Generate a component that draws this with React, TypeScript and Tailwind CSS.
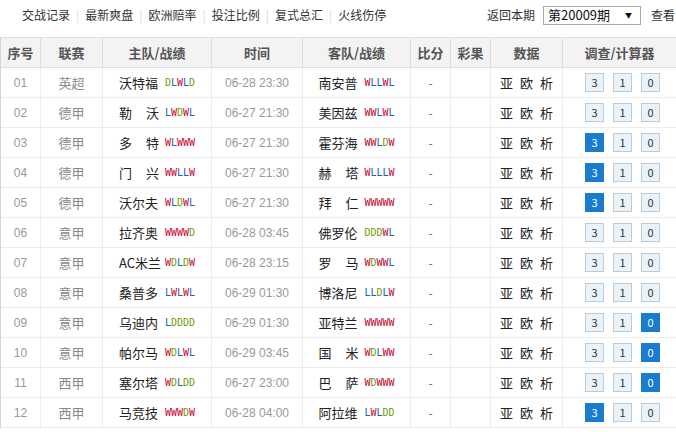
import { FC } from "react";

type Row = {
  no: string;
  league: string;
  home: string;
  homeForm: string;
  time: string;
  away: string;
  awayForm: string;
  pick: "3" | "1" | "0" | "";
};

const rows: Row[] = [
  { no: "01", league: "英超", home: "沃特福", homeForm: "DLWLD", time: "06-28 23:30", away: "南安普", awayForm: "WLLWL", pick: "" },
  { no: "02", league: "德甲", home: "勒 沃", homeForm: "LWDWL", time: "06-27 21:30", away: "美因兹", awayForm: "WWLWL", pick: "" },
  { no: "03", league: "德甲", home: "多 特", homeForm: "WLWWW", time: "06-27 21:30", away: "霍芬海", awayForm: "WWLDW", pick: "3" },
  { no: "04", league: "德甲", home: "门 兴", homeForm: "WWLLW", time: "06-27 21:30", away: "赫 塔", awayForm: "WLLLW", pick: "3" },
  { no: "05", league: "德甲", home: "沃尔夫", homeForm: "WLDWL", time: "06-27 21:30", away: "拜 仁", awayForm: "WWWWW", pick: "3" },
  { no: "06", league: "意甲", home: "拉齐奥", homeForm: "WWWWD", time: "06-28 03:45", away: "佛罗伦", awayForm: "DDDWL", pick: "" },
  { no: "07", league: "意甲", home: "AC米兰", homeForm: "WDLDW", time: "06-28 23:15", away: "罗 马", awayForm: "WDWWL", pick: "" },
  { no: "08", league: "意甲", home: "桑普多", homeForm: "LWLWL", time: "06-29 01:30", away: "博洛尼", awayForm: "LLDLW", pick: "" },
  { no: "09", league: "意甲", home: "乌迪内", homeForm: "LDDDD", time: "06-29 01:30", away: "亚特兰", awayForm: "WWWWW", pick: "0" },
  { no: "10", league: "意甲", home: "帕尔马", homeForm: "WDLWL", time: "06-29 03:45", away: "国 米", awayForm: "WDLWW", pick: "0" },
  { no: "11", league: "西甲", home: "塞尔塔", homeForm: "WDLDD", time: "06-27 23:00", away: "巴 萨", awayForm: "WDWWW", pick: "0" },
  { no: "12", league: "西甲", home: "马竞技", homeForm: "WWWDW", time: "06-28 04:00", away: "阿拉维", awayForm: "LWLDD", pick: "3" },
];

const navItems = ["交战记录", "最新爽盘", "欧洲赔率", "投注比例", "复式总汇", "火线伤停"];

const cols = "grid grid-cols-[40px_62px_109px_91px_108px_40px_40px_72px_113px]";
const cn = "font-['Noto_Sans_CJK_SC','Liberation_Sans',sans-serif]";

const Form: FC<{ form: string }> = ({ form }) => (
  <span className="font-['DejaVu_Sans_Mono',monospace] text-[10px] leading-none">
    {form.split("").map((c, i) => (
      <span
        key={i}
        className={c === "W" ? "text-[#c4002b]" : c === "D" ? "text-[#6fa000]" : "text-[#1565b8]"}
      >
        {c}
      </span>
    ))}
  </span>
);

// two-character names are spread over the full three-character width
const Team: FC<{ name: string; form: string }> = ({ name, form }) => {
  const parts = name.includes(" ") ? name.split(" ") : [name];
  return (
    <div className="flex items-center justify-center gap-[6px]">
      <span className="w-[40px] flex justify-between text-[13px] text-[#222] whitespace-nowrap">
        {parts.map((p, i) => (
          <span key={i}>{p}</span>
        ))}
      </span>
      <Form form={form} />
    </div>
  );
};

const PickBox: FC<{ label: string; on: boolean }> = ({ label, on }) => (
  <span
    className={
      on
        ? "w-[19px] h-[19px] flex items-center justify-center text-[11px] text-white bg-[#1a7ccf] border border-[#1a7ccf]"
        : "w-[19px] h-[19px] flex items-center justify-center text-[11px] text-[#333] bg-[#e9f3fb] border border-[#c4c9cd]"
    }
  >
    {label}
  </span>
);

export default function App() {
  return (
    <div className={`w-[676px] h-[432px] overflow-hidden bg-white ${cn}`}>
      {/* top nav */}
      <div className="h-[30px] flex items-center justify-between pl-[22px] text-[12px] text-[#333]">
        <div className="flex items-center">
          {navItems.map((t, i) => (
            <div key={t} className="flex items-center">
              {i > 0 && <span className="px-[6px] text-[#d8d8d8]">|</span>}
              <span>{t}</span>
            </div>
          ))}
        </div>
        <div className="flex items-center">
          <span>返回本期</span>
          <div className="ml-[8px] w-[98px] h-[19px] border border-[#a9a9a9] flex items-center justify-between pl-[4px] pr-[8px] text-[13px] text-[#111]">
            <span>第20009期</span>
            <span className="text-[7px]">▼</span>
          </div>
          <span className="ml-[10px] w-[25px] whitespace-nowrap overflow-hidden">查看</span>
        </div>
      </div>

      {/* table */}
      <div className="mt-[7px] border-l border-[#d4d4d4]">
        <div className={`${cols} h-[31px] bg-[#f3f3f3] border-y border-[#dedede] text-[13px] font-bold text-[#555]`}>
          {["序号", "联赛", "主队/战绩", "时间", "客队/战绩", "比分", "彩果", "数据", "调查/计算器"].map((h, i) => (
            <div key={h} className={`flex items-center justify-center ${i < 8 ? "border-r border-[#dedede]" : ""}`}>
              {h}
            </div>
          ))}
        </div>
        {rows.map((r) => (
          <div key={r.no} className={`${cols} h-[30px] border-b border-[#ececec] text-[12px]`}>
            <div className="flex items-center justify-center border-r border-[#ececec] text-[#999] font-['Liberation_Sans',sans-serif]">{r.no}</div>
            <div className="flex items-center justify-center border-r border-[#ececec] text-[#888] text-[13px]">{r.league}</div>
            <div className="flex items-center justify-center border-r border-[#ececec]">
              <Team name={r.home} form={r.homeForm} />
            </div>
            <div className="flex items-center justify-center border-r border-[#ececec] text-[#999] text-[12px] font-['Liberation_Sans',sans-serif]">{r.time}</div>
            <div className="flex items-center justify-center border-r border-[#ececec]">
              <Team name={r.away} form={r.awayForm} />
            </div>
            <div className="flex items-center justify-center border-r border-[#ececec] text-[#666]">-</div>
            <div className="border-r border-[#ececec]"></div>
            <div className="flex items-center justify-center gap-[7px] border-r border-[#ececec] text-[13px] text-[#222]">
              <span>亚</span>
              <span>欧</span>
              <span>析</span>
            </div>
            <div className="flex items-center justify-center gap-[9px] pl-[6px]">
              <PickBox label="3" on={r.pick === "3"} />
              <PickBox label="1" on={r.pick === "1"} />
              <PickBox label="0" on={r.pick === "0"} />
            </div>
          </div>
        ))}
      </div>
    </div>
  );
}
